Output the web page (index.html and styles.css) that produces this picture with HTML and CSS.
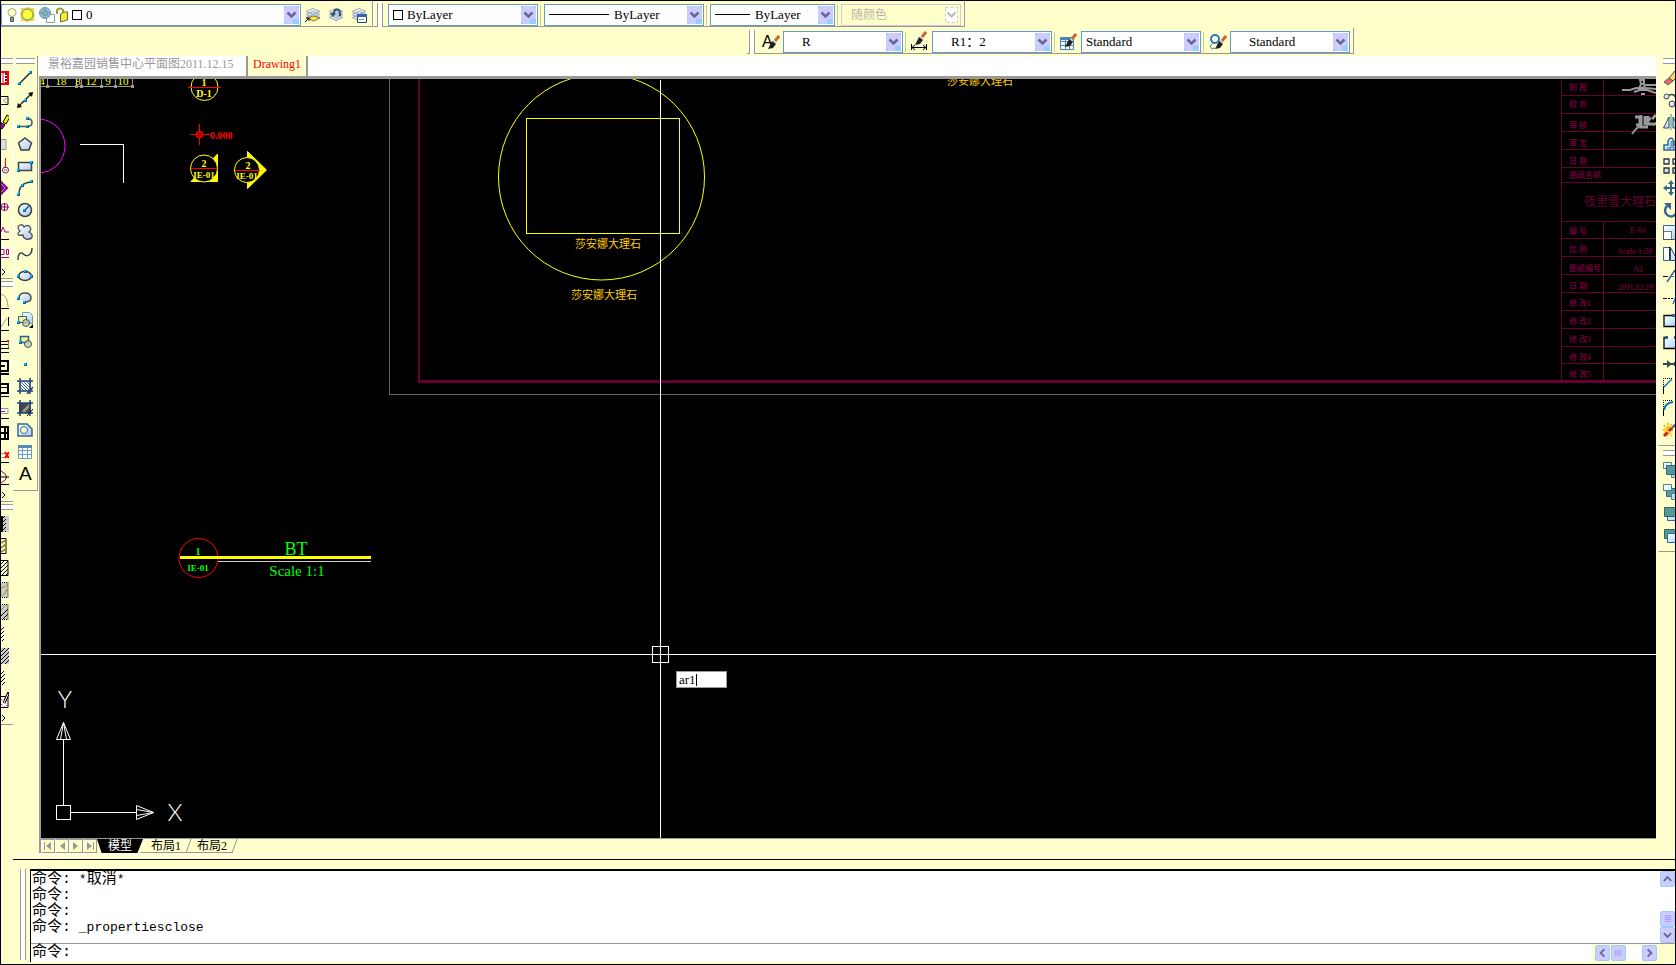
FILE: index.html
```
<!DOCTYPE html>
<html lang="zh-CN">
<head>
    <meta charset="UTF-8">
    <meta name="viewport" content="width=device-width, initial-scale=1.0">
    <title>Drawing1</title>
    <link rel="stylesheet" href="styles.css">
</head>
<body>

<svg class="defs" width="0" height="0" aria-hidden="true">
    <defs>
        <linearGradient id="glass" x1="0" y1="0" x2="1" y2="1">
            <stop offset="0" stop-color="#ffffff"/>
            <stop offset="1" stop-color="#b8c4e4"/>
        </linearGradient>
        <linearGradient id="sky" x1="0" y1="0" x2="1" y2="1">
            <stop offset="0" stop-color="#ffffff"/>
            <stop offset=".5" stop-color="#ccecff"/>
            <stop offset="1" stop-color="#c0b8f0"/>
        </linearGradient>
        <pattern id="hatch" width="3" height="3" patternUnits="userSpaceOnUse">
            <path d="M0 0L3 3" stroke="#336699"/>
        </pattern>
        <pattern id="dots" width="4" height="4" patternUnits="userSpaceOnUse">
            <path d="M0 4L4 0M-1 1L1 -1M3 5L5 3" stroke="#000"/>
        </pattern>
    </defs>
    <symbol id="node" viewBox="0 0 3 3"><path fill="#069" d="M0 0h3v3H0z"/><path fill="#0bf" d="M0 0h2v2H0z"/></symbol>
    <symbol id="down" viewBox="0 0 15 18">
        <path fill="#ccf" d="M0 0h15v18H0z"/>
        <path fill="#9cf" d="M9 13h6v5H9zM0 0h2v2H0zM13 0h2v2h-2zM0 16h2v2H0z"/>
        <path fill="none" stroke="#669" stroke-width="2.5" d="M3.500 6.500l4 4 4-4"/>
    </symbol>
    <symbol id="layers" viewBox="0 0 16 16">
        <path fill="url(#glass)" stroke="#9ab" d="M1 10.500l7-3 7 3-7 3zM1 7.500l7-3 7 3-7 3zM1 4.500l7-3 7 3-7 3z"/>
    </symbol>
    <symbol id="brush" viewBox="0 0 16 16">
        <path stroke="#c63" stroke-width="3" d="M15 2l-4 5"/>
        <path stroke="#ccc" stroke-width="3" d="M11 7l-1.500 2"/>
        <path fill="#222" d="M8 7l4 3-3 4-5 1z"/>
    </symbol>
</svg>

<div class="app">

    <div class="toolbar-row">
        <div class="toolbar">
            <div class="combo layer">
                <svg class="state" width="62" height="16" viewBox="0 0 62 16">
                    <circle cx="6" cy="5.500" r="4" fill="#ffc" stroke="#aa7"/><path fill="#999" stroke="#555" d="M4.500 10.500h3v4h-3z"/>
                    <path fill="#fc3" d="M15 1h4l3-1 3 1h3v4l1 3-1 3v3h-4l-3 1-3-1h-3v-4l-1-3 1-3z"/><circle cx="21.500" cy="7.500" r="5.500" fill="#ff3" stroke="#48a"/>
                    <path fill="#fff" stroke="#999" d="M40.500 7.500h8v8h-8z"/><circle cx="39" cy="6" r="5.500" fill="#9bc" stroke="#69a"/><circle cx="39" cy="6" r="2.500" fill="#bdc" stroke="#58a"/><path stroke="#69a" d="M39 0v12M33 6h12"/>
                    <path fill="none" stroke="#993" stroke-width="2" d="M51 7V3q3-3 6 0v3"/><path fill="#ee3" stroke="#663" d="M54.500 7q3-3 7-2v8l-7 2z"/>
                </svg>
                <span class="swatch"></span>
                <select aria-label="图层"><option>0</option></select>
                <svg class="arrow"><use href="#down"/></svg>
            </div>
            <button class="tool" title="将对象的图层置为当前"><svg viewBox="0 0 16 16"><use href="#layers"/><path fill="#fe3" stroke="#875" d="M3 11l5-2 7 2-6 3z"/><path d="M0 15l4-4M1 11h3v3" fill="none" stroke="#000"/></svg></button>
            <button class="tool" title="上一个图层"><svg viewBox="0 0 16 16"><use href="#layers"/><path fill="none" stroke="#357" stroke-width="2" d="M12 9q1-8-5-6l-2 4"/><path fill="#357" d="M2 6h6l-3 4z"/></svg></button>
            <button class="tool" title="图层特性管理器"><svg viewBox="0 0 16 16"><use href="#layers"/><path fill="#fff" stroke="#247" d="M6.500 7.500h9v8h-9z"/><path fill="#36a" d="M6 7h10v3H6z"/><path stroke="#69c" d="M8 12.500h5"/></svg></button>
        </div>
        <div class="toolbar">
            <span class="grip"></span>
            <div class="combo color">
                <span class="swatch"></span>
                <select aria-label="颜色"><option>ByLayer</option></select>
                <svg class="arrow"><use href="#down"/></svg>
            </div>
            <span class="sep"></span>
            <div class="combo linetype">
                <span class="line-sample"></span>
                <select aria-label="线型"><option>ByLayer</option></select>
                <svg class="arrow"><use href="#down"/></svg>
            </div>
            <span class="sep"></span>
            <div class="combo lineweight">
                <span class="line-sample"></span>
                <select aria-label="线宽"><option>ByLayer</option></select>
                <svg class="arrow"><use href="#down"/></svg>
            </div>
            <span class="sep"></span>
            <div class="combo plot disabled">
                <select aria-label="打印样式" disabled><option>随颜色</option></select>
                <svg class="arrow" viewBox="0 0 15 18"><path fill="#fff" stroke="#ccc" stroke-dasharray="3 2" d="M1.500 1.500h12v15h-12z"/><path fill="none" stroke="#bbb" stroke-width="2" d="M3.500 6.500l4 4 4-4"/></svg>
            </div>
        </div>
    </div>

    <div class="toolbar-row styles-row">
        <div class="toolbar">
            <span class="grip"></span>
            <button class="tool" title="文字样式"><svg viewBox="0 0 16 16"><text x="0" y="13" font-size="16">A</text><use href="#brush" x="2"/></svg></button>
            <div class="combo style indent">
                <select aria-label="文字样式"><option>R</option></select>
                <svg class="arrow"><use href="#down"/></svg>
            </div>
            <span class="sep"></span>
            <button class="tool" title="标注样式"><svg viewBox="0 0 16 16"><use href="#brush" y="-4"/><path stroke="#000" fill="none" d="M.500 10v6M15.500 10v6M1 13.500h14M4 11l-3 2.500L4 16M12 11l3 2.500-3 2.500"/></svg></button>
            <div class="combo style indent">
                <select aria-label="标注样式"><option>R1：2</option></select>
                <svg class="arrow"><use href="#down"/></svg>
            </div>
            <span class="sep"></span>
            <button class="tool" title="表格样式"><svg viewBox="0 0 16 16"><path fill="#fff" stroke="#48b" d="M.500 3.500h13v12H.500zM1 7.500h12M1 11.500h12M5.500 4v11M9.500 4v11"/><path fill="#48b" d="M1 3h13v3H1z"/><use href="#brush" y="-2" x="1"/></svg></button>
            <div class="combo style">
                <select aria-label="表格样式"><option>Standard</option></select>
                <svg class="arrow"><use href="#down"/></svg>
            </div>
            <span class="sep"></span>
            <button class="tool" title="多重引线样式"><svg viewBox="0 0 16 16"><circle cx="6" cy="5" r="4" fill="#fff" stroke="#247bb5" stroke-width="2"/><path fill="none" stroke="#48b" d="M4 9l-3 3 2 3 3-1"/><use href="#brush" x="2"/></svg></button>
            <div class="combo style indent">
                <select aria-label="多重引线样式"><option>Standard</option></select>
                <svg class="arrow"><use href="#down"/></svg>
            </div>
        </div>
    </div>

    <div class="workspace">

        <div class="side custom">
            <div class="palette">
                <span class="hgrip"></span>
                <button title="图块"><svg viewBox="0 0 8 16"><path fill="#fff" stroke="red" stroke-width="2" d="M-2 2h9v12h-9"/><path stroke="#606" stroke-width="2" stroke-dasharray="2 1" d="M5 3v10"/><path stroke="red" d="M2 2v12"/></svg></button>
                <button title="信封"><svg viewBox="0 0 8 16"><path fill="#ffc" stroke="#000" d="M-1 4.500h8v8h-8"/><path stroke="#999" fill="none" d="M6 6L2 8.500 6 11"/></svg></button>
                <button title="删除"><svg viewBox="0 0 8 16"><path fill="#ee0" stroke="#000" d="M2 8l4-7 3 2-4 7z"/><path fill="#a0a" stroke="#000" d="M-1 8l5 3-3 4-3-2z"/></svg></button>
                <button title="实体"><svg viewBox="0 0 8 16"><path fill="#ddd" stroke="#999" d="M-1 3.500h6v10h-6"/></svg></button>
                <button title="轴号"><svg viewBox="0 0 8 16"><path stroke="red" d="M4.500 0v10"/><circle cx="4.500" cy="12" r="3" fill="none" stroke="#808"/><path stroke="#096" d="M3 12h3"/></svg></button>
                <button title="索引"><svg viewBox="0 0 8 16"><path fill="#fff" stroke="#808" stroke-width="2" d="M-1 1l7 7-7 7"/><path fill="#808" d="M0 4l4 4-4 4z"/></svg></button>
                <button title="标高"><svg viewBox="0 0 8 16"><circle cx="3.500" cy="5" r="3.500" fill="none" stroke="#808"/><path stroke="#808" d="M0 5h8M3.500 1v8"/></svg></button>
                <button title="折断"><svg viewBox="0 0 8 16"><path fill="none" stroke="#a0a" d="M0 8l2-5 2 5h4"/><path stroke="#000" d="M0 15.500h8"/></svg></button>
                <button title="文字"><svg viewBox="0 0 8 16"><path fill="none" stroke="#a0a" d="M0 3.500h3v5H0M5.500 3.500h2v5h-2zM0 11.500h8"/></svg></button>
                <button class="more" title="更多"><svg viewBox="0 0 8 12"><path fill="none" stroke="#000" d="M1 3l3 3-3 3"/></svg></button>
            </div>
            <div class="palette">
                <span class="hgrip"></span>
                <button title="门"><svg viewBox="0 0 8 16"><path fill="none" stroke="#999" d="M0 1q7 2 7 13"/><path stroke="#000" d="M0 15.500h8"/></svg></button>
                <button title="单开门"><svg viewBox="0 0 8 16"><path fill="none" stroke="#999" d="M0 12l6-9"/><path fill="none" stroke="#000" d="M7.500 2v9M0 15.500h8"/></svg></button>
                <button title="窗"><svg viewBox="0 0 8 16"><path stroke="#000" fill="none" d="M0 4.500h8v7H0M0 7.500h7M0 15.500h8"/><path fill="red" d="M6 3h2v2H6z"/></svg></button>
                <button title="柜"><svg viewBox="0 0 8 16"><path stroke="#000" stroke-width="2" fill="none" d="M0 2h7v10H0M0 7h4M0 15h8"/></svg></button>
                <button title="沙发"><svg viewBox="0 0 8 16"><path stroke="#000" stroke-width="2" fill="none" d="M0 3h7v9H0"/><path stroke="#000" d="M0 6.500h7M0 15.500h8"/></svg></button>
                <button title="尺寸"><svg viewBox="0 0 8 16"><path fill="#fff" stroke="#999" d="M-1 5.500h8v5h-8"/><path stroke="#a0a" d="M0 8.500h4"/><path stroke="#000" d="M0 15.500h8"/></svg></button>
                <button title="灶具"><svg viewBox="0 0 8 16"><path stroke="#000" stroke-width="2" fill="none" d="M0 2h7v12H0M4 2v12M0 8h7"/></svg></button>
                <button title="修剪"><svg viewBox="0 0 8 16"><path stroke="#999" d="M0 6.500h8M0 10.500h8"/><path stroke="red" stroke-width="2" d="M4 5l4 6M8 5l-4 6"/><path stroke="#000" d="M0 15.500h8"/></svg></button>
                <button title="圆"><svg viewBox="0 0 8 16"><path stroke="#808" fill="none" d="M0 2q11 6 0 12"/><path stroke="#000" d="M0 8h8M0 15.500h8"/></svg></button>
                <button class="more" title="更多"><svg viewBox="0 0 8 12"><path fill="none" stroke="#000" d="M1 3l3 3-3 3"/></svg></button>
            </div>
            <div class="palette">
                <span class="hgrip"></span>
                <button title="填充 1"><svg viewBox="0 0 8 16"><path fill="#ccc" d="M0 0h8v16H0z"/><path fill="url(#dots)" d="M0 0h5v16H0z"/><path stroke="#000" stroke-width="2" d="M1 0v16"/></svg></button>
                <button title="填充 2"><svg viewBox="0 0 8 16"><path fill="#fff" stroke="#000" d="M-1 .5h6v15h-6"/><path fill="none" stroke="#990" stroke-width="2" d="M0 5l5-3M0 10l5-4M0 14l5-3"/></svg></button>
                <button title="填充 3"><svg viewBox="0 0 8 16"><path fill="#ffc" d="M0 0h8v16H0z"/><path fill="url(#dots)" stroke="#000" d="M-1 .5h8v15h-8"/></svg></button>
                <button title="填充 4"><svg viewBox="0 0 8 16"><path fill="#ccc" stroke="#000" stroke-dasharray="1" d="M-1 .5h8v15h-8"/><path fill="none" stroke="#990" d="M0 6q5-1 7-4M0 14q5-2 6-7"/></svg></button>
                <button title="填充 5"><svg viewBox="0 0 8 16"><path fill="#ccc" stroke="#000" stroke-dasharray="1" d="M-1 .5h8v15h-8"/><path stroke="#990" d="M0 6l5-5"/><path stroke="#000" d="M0 12l7-7M2 15l5-5"/></svg></button>
                <button title="填充 6"><svg viewBox="0 0 8 16"><path fill="url(#dots)" d="M0 1h3v14H0z"/></svg></button>
                <button title="填充 7"><svg viewBox="0 0 8 16"><path fill="#ccc" d="M0 0h8v16H0z"/><path fill="url(#dots)" d="M0 0h8v16H0z"/></svg></button>
                <button title="填充 8"><svg viewBox="0 0 8 16"><path fill="url(#dots)" d="M0 1h4v14H0z"/></svg></button>
                <button title="编辑填充"><svg viewBox="0 0 8 16"><path fill="#fff" stroke="#000" d="M-1 4.500h8v11h-8"/><path stroke="#c36" stroke-dasharray="2" d="M0 7l6 7M0 12l4 3"/><path stroke="#000" stroke-width="3" d="M3 11l5-11"/><path stroke="#fff" d="M3 11l4-9"/></svg></button>
                <button class="more" title="更多"><svg viewBox="0 0 8 12"><path fill="none" stroke="#000" d="M1 3l3 3-3 3"/></svg></button>
            </div>
        </div>

        <div class="side draw">
            <div class="palette">
                <span class="hgrip"></span>
                <button title="直线"><svg viewBox="0 0 16 16"><path stroke="#223" stroke-width="1.500" d="M2 14L14 2"/><use href="#node" x="1" y="12" width="3" height="3"/><use href="#node" x="12" y="1" width="3" height="3"/></svg></button>
                <button title="构造线"><svg viewBox="0 0 16 16"><path stroke="#223" stroke-width="1.500" d="M2 14L14 2"/><path d="M0 16l1-5 4 4zM16 0l-1 5-4-4z"/><use href="#node" x="7" y="7" width="3" height="3"/></svg></button>
                <button title="多段线"><svg viewBox="0 0 16 16"><path fill="none" stroke="#456" stroke-width="1.500" d="M1 12.500h9q5 0 5-4t-5-4"/><use href="#node" x="0" y="11" width="3" height="3"/><use href="#node" x="9" y="11" width="3" height="3"/><use href="#node" x="9" y="3" width="3" height="3"/></svg></button>
                <button title="正多边形"><svg viewBox="0 0 16 16"><path fill="url(#glass)" stroke="#345" stroke-width="1.500" d="M8 2l6.500 5-2.500 7H4L1.500 7z"/></svg></button>
                <button title="矩形"><svg viewBox="0 0 16 16"><path fill="url(#glass)" stroke="#345" stroke-width="1.500" d="M1.500 4.500h13v8h-13z"/><use href="#node" x="0" y="11" width="3" height="3"/><use href="#node" x="13" y="3" width="3" height="3"/></svg></button>
                <button title="圆弧"><svg viewBox="0 0 16 16"><path fill="none" stroke="#345" stroke-width="1.500" d="M2 14Q2 3 14 2"/><use href="#node" x="0" y="13" width="3" height="3"/><use href="#node" x="4" y="4" width="3" height="3"/><use href="#node" x="13" y="0" width="3" height="3"/></svg></button>
                <button title="圆"><svg viewBox="0 0 16 16"><circle cx="8" cy="8" r="6.500" fill="url(#glass)" stroke="#345" stroke-width="1.500"/><path stroke="#069" stroke-width="1.500" d="M8 8l4-4"/><use href="#node" x="6" y="7" width="3" height="3"/></svg></button>
                <button title="修订云线"><svg viewBox="0 0 16 16"><path fill="url(#glass)" stroke="#456" stroke-width="1.300" d="M3 7Q-1 3 3 1q3-1 4 2 4-3 6 0t-1 5q4 2 3 5t-6 2q-3-1-3-4-5 1-5-1t2-3z"/></svg></button>
                <button title="样条曲线"><svg viewBox="0 0 16 16"><path fill="none" stroke="#345" stroke-width="1.500" d="M1 14q0-8 4-7 4 4 7 2 3-2 3-7"/></svg></button>
                <button title="椭圆"><svg viewBox="0 0 16 16"><ellipse cx="8" cy="8" rx="6.500" ry="4.500" fill="url(#glass)" stroke="#345" stroke-width="1.500"/><use href="#node" x="0" y="7" width="3" height="3"/><use href="#node" x="13" y="7" width="3" height="3"/><use href="#node" x="7" y="2" width="3" height="3"/></svg></button>
                <button title="椭圆弧"><svg viewBox="0 0 16 16"><path fill="url(#glass)" stroke="#456" stroke-width="1.500" d="M2 8q0-5 6-5t6 5q0 4-6 4"/><use href="#node" x="0" y="7" width="3" height="3"/><use href="#node" x="6" y="11" width="3" height="3"/></svg></button>
                <button title="插入块"><svg viewBox="0 0 16 16"><path fill="url(#sky)" stroke="#69b" d="M5.500.5h7l3 3v8h-10z"/><path fill="#fe9" stroke="#25628c" d="M1.500 4.500h8v6h-8z"/><circle cx="9" cy="11" r="3.500" fill="#cc9" stroke="#357" fill-opacity=".8"/><path d="M16 12v4h-4z"/><use href="#node" x="0" y="9" width="3" height="3"/></svg></button>
                <button title="创建块"><svg viewBox="0 0 16 16"><path fill="#fe9" stroke="#25628c" stroke-width="1.500" d="M3.500 2.500h8v6h-8z"/><circle cx="11" cy="10" r="3.500" fill="#cc9" stroke="#357" fill-opacity=".8"/><use href="#node" x="2" y="7" width="3" height="3"/></svg></button>
                <button title="点"><svg viewBox="0 0 16 16"><use href="#node" x="7" y="7" width="3" height="3"/></svg></button>
                <button title="图案填充"><svg viewBox="0 0 16 16"><path fill="#fff" d="M2 3h12v10H2z"/><path fill="url(#hatch)" d="M2 3h12v10H2z"/><path stroke="#247" stroke-width="1.500" d="M0 3h16M0 13h16M3 0v16M13 0v16M10 16l6-7"/></svg></button>
                <button title="渐变色"><svg viewBox="0 0 16 16"><path fill="#445" d="M2 3h12v10H2z"/><path stroke="#996" stroke-width="3" d="M6 12l7-7"/><path stroke="#247" stroke-width="1.500" d="M0 3h16M0 13h16M3 0v16M13 0v16"/><path stroke="#111" d="M10 16l6-7"/></svg></button>
                <button title="面域"><svg viewBox="0 0 16 16"><path fill="url(#sky)" stroke="#369" stroke-width="1.500" d="M1 2h9l5 5v7H1z"/><circle cx="7" cy="8" r="3.500" fill="#ffc" stroke="#369"/></svg></button>
                <button title="表格"><svg viewBox="0 0 16 16"><path fill="#fff" stroke="#69c" d="M1.500 2.500h13v12h-13zM1 6.500h14M1 10.500h14M5.500 3v11M10.500 3v11"/><path fill="#58b" d="M1 1h14v3H1z"/></svg></button>
                <button class="mtext" title="多行文字">A</button>
            </div>
        </div>

        <div class="document">
            <nav class="file-tabs">
                <a href="#">景裕嘉园销售中心平面图2011.12.15</a>
                <a href="#" class="current">Drawing1</a>
            </nav>

            <div class="canvas">
                <svg class="drawing" role="img" aria-label="图纸">
                    <!-- model space, shifted so the visible corner falls at 41,79 -->
                    <g transform="translate(-41 -79)" fill="none">
                        <g stroke="#999" shape-rendering="crispEdges">
                            <path d="M41 86.500h92M47.500 79v9M76.500 79v9M81.500 79v9M101.500 79v9M115.500 79v9M132.500 79v9"/>
                            <path stroke-width="3" d="M46 86.500h3M75 86.500h3M80 86.500h3M100 86.500h3M114 86.500h3M131 86.500h3"/>
                        </g>
                        <g class="t-yellow small">
                            <text x="42" y="85" text-anchor="middle">4</text>
                            <text x="61" y="85" text-anchor="middle">18</text>
                            <text x="78" y="85" text-anchor="middle">8</text>
                            <text x="91" y="85" text-anchor="middle">12</text>
                            <text x="108" y="85" text-anchor="middle">9</text>
                            <text x="123" y="85" text-anchor="middle">10</text>
                        </g>
                        <circle cx="38" cy="146" r="27" stroke="#f0f"/>
                        <path stroke="#fff" shape-rendering="crispEdges" d="M80 144.500h43.500V183"/>

                        <g stroke="#ff0">
                            <circle cx="204.500" cy="87" r="13.500"/>
                            <path fill="#ff0" d="M217.500 154v27.500H191z"/>
                            <circle cx="204" cy="168.500" r="13.500" fill="#000"/>
                            <path fill="#ff0" d="M247.500 151.500l19 18.500-19 18.500z"/>
                            <circle cx="247" cy="170" r="12.500" fill="#000"/>
                        </g>
                        <g stroke="red" shape-rendering="crispEdges">
                            <path d="M188 87.500h33M191 168.500h26M235 170.500h25M190 134.500h20M199.500 124v21"/>
                        </g>
                        <circle cx="199.500" cy="134.500" r="3.500" stroke="red" fill="#a00"/>
                        <text class="t-red tiny" x="210" y="139">0.000</text>
                        <g class="t-yellow tiny" text-anchor="middle">
                            <text x="204" y="86">1</text>
                            <text x="204" y="97">D-1</text>
                            <text x="204" y="167">2</text>
                            <text class="ref" x="204" y="178">IE-01</text>
                            <text x="248" y="169">2</text>
                            <text class="ref" x="247" y="179">IE-01</text>
                        </g>

                        <circle cx="198.500" cy="558" r="19.500" stroke="red"/>
                        <g shape-rendering="crispEdges">
                            <path stroke="#ff0" stroke-width="3" d="M180 557.500h191"/>
                            <path stroke="#ccc" d="M218 561.500h153"/>
                        </g>
                        <g class="t-green" text-anchor="middle">
                            <text class="tiny" x="198" y="555">1</text>
                            <text class="ref" x="198" y="571">IE-01</text>
                            <text class="title" x="296" y="555">BT</text>
                            <text class="scale" x="297" y="576">Scale 1:1</text>
                        </g>

                        <g shape-rendering="crispEdges">
                            <path stroke="#666" d="M389.500 79v315.500H4000"/>
                            <path stroke="#603" stroke-width="2" d="M419 79v303"/>
                            <path stroke="#603" stroke-width="3" d="M418 381.500H4000"/>
                            <path stroke="#ff0" d="M526.500 118.500h153v115h-153z"/>
                        </g>
                        <circle cx="601.500" cy="177" r="103" stroke="#ff0"/>
                        <g class="t-gold" text-anchor="middle">
                            <text x="608" y="248">莎安娜大理石</text>
                            <text x="604" y="299">莎安娜大理石</text>
                            <text x="980" y="85">莎安娜大理石</text>
                        </g>

                        <!-- title block -->
                        <path stroke="#603" shape-rendering="crispEdges" d="M1561.500 79v302M1603.500 79v88M1603.500 221v160M1561 95.500H4000M1561 113.500H4000M1561 131.500H4000M1561 149.500H4000M1561 167.500H4000M1561 182.500H4000M1561 221.500H4000M1561 238.500H4000M1561 256.500H4000M1561 274.500H4000M1561 292.500H4000M1561 310.500H4000M1561 328.500H4000M1561 346.500H4000M1561 363.500H4000"/>
                        <g class="t-plum">
                            <text x="1569" y="90">制 图</text>
                            <text x="1569" y="107">校 对</text>
                            <text x="1569" y="128">审 核</text>
                            <text x="1569" y="146">审 定</text>
                            <text x="1569" y="164">日 期</text>
                            <text x="1569" y="178">图纸名称</text>
                            <text class="name" x="1584" y="206">夜里雪大理石台</text>
                            <text x="1569" y="234">编 号</text>
                            <text x="1569" y="252">比 例</text>
                            <text x="1569" y="271">图纸编号</text>
                            <text x="1569" y="289">日 期</text>
                            <text x="1569" y="306">修 改1</text>
                            <text x="1569" y="324">修 改2</text>
                            <text x="1569" y="342">修 改3</text>
                            <text x="1569" y="360">修 改4</text>
                            <text x="1569" y="377">修 改5</text>
                            <text x="1630" y="233">E-01</text>
                            <text x="1618" y="254">Scale 1:50</text>
                            <text x="1633" y="272">A3</text>
                            <text x="1618" y="290">2011.12.19</text>
                        </g>
                        <g stroke="#999" stroke-width="2">
                            <path d="M1622 90h8l6-2h6l4-3h10M1640 80h4v4h-3zM1641 84l-2 5 8 1 9 3M1634 92l12-4 10 1M1641 94h4"/>
                            <path stroke-width="3" d="M1635 117h5v8h-4M1641 115v12h7M1645 116v9M1645 119h6M1648 116v8h5M1652 119l4-4M1653 125l3-2"/>
                            <path d="M1640 126l-4 3-4 5"/>
                        </g>

                        <!-- UCS icon -->
                        <path stroke="#fff" shape-rendering="crispEdges" d="M63.500 740v65M56.500 805.500h14v14h-14zM71 812.500h65"/>
                        <path stroke="#fff" d="M63.500 722.500l-7 17h14zM63.500 722.500l-3 17M63.500 722.500l3 17M153.500 812.500l-17-7v14zM153.500 812.500l-17-3M153.500 812.500l-17 3"/>
                        <text class="axis" x="65" y="708" text-anchor="middle">Y</text>
                        <text class="axis" x="175" y="821" text-anchor="middle">X</text>

                        <path stroke="#fff" shape-rendering="crispEdges" d="M660.500 80v4000M41 654.500H4000M652.500 646.500h16v16h-16z"/>
                    </g>
                </svg>
                <label class="dyn-input"><input type="text" value="ar1" aria-label="动态输入"></label>
            </div>

            <div class="sheet-tabs">
                <button class="nav" title="第一个"><svg viewBox="0 0 12 12"><path d="M2 2h1v8H2zM9 2v8L4 6z"/></svg></button>
                <button class="nav" title="上一个"><svg viewBox="0 0 12 12"><path d="M9 2v8L4 6z"/></svg></button>
                <button class="nav" title="下一个"><svg viewBox="0 0 12 12"><path d="M3 2v8l5-4z"/></svg></button>
                <button class="nav" title="最后一个"><svg viewBox="0 0 12 12"><path d="M9 2h1v8H9zM3 2v8l5-4z"/></svg></button>
                <button class="sheet current">模型</button>
                <button class="sheet">布局1</button>
                <button class="sheet">布局2</button>
            </div>
        </div>

        <div class="side modify">
            <div class="palette">
                <span class="hgrip"></span>
                <button title="删除"><svg viewBox="0 0 16 16"><path fill="#fd6" stroke="#543" d="M6 8l6-7 4 3-6 7z"/><path fill="#e66" stroke="#666" d="M1 12l5-4 4 3-5 4z"/></svg></button>
                <button title="复制"><svg viewBox="0 0 16 16"><path fill="none" stroke="#345" stroke-width="1.500" d="M6 3q6-2 7 4"/><circle cx="3.500" cy="4.500" r="2.500" fill="url(#glass)" stroke="#345"/><circle cx="9" cy="12" r="3" fill="url(#glass)" stroke="#345"/></svg></button>
                <button title="镜像"><svg viewBox="0 0 16 16"><path fill="url(#glass)" stroke="#345" d="M6 3v11H.500zM10 3v11h5.500z"/><path stroke="#09c" d="M8 0v16"/></svg></button>
                <button title="偏移"><svg viewBox="0 0 16 16"><path fill="url(#sky)" stroke="#369" stroke-width="1.500" d="M1 14V9h4V5q3-6 6 0v4h5v5z"/><path fill="none" stroke="#369" d="M4 12h4V6q1-2 2 0v6h5"/></svg></button>
                <button title="阵列"><svg viewBox="0 0 16 16"><path fill="url(#glass)" stroke="#234" stroke-width="1.300" d="M1 1h5v5H1zM10 1h5v5h-5zM1 10h5v5H1zM10 10h5v5h-5z"/></svg></button>
                <button title="移动"><svg viewBox="0 0 16 16"><path fill="#369" d="M8 0l3 4H9v3h3V5l4 3-4 3V9H9v3h2l-3 4-3-4h2V9H4v2L0 8l4-3v2h3V4H5z"/></svg></button>
                <button title="旋转"><svg viewBox="0 0 16 16"><path fill="none" stroke="#369" stroke-width="2.500" d="M4 4a6 6 0 1 0 9 1"/><path fill="#369" d="M1 1h7v7z"/></svg></button>
                <button title="缩放"><svg viewBox="0 0 16 16"><path fill="url(#sky)" stroke="#369" d="M.500 1.500h15v14H.500z"/><path fill="#fff" stroke="#000" stroke-dasharray="1" d="M.500 7.500h8v8h-8z"/></svg></button>
                <button title="拉伸"><svg viewBox="0 0 16 16"><path fill="#fff" stroke="#369" d="M.500 1.500h6v13h-6z"/><path fill="url(#sky)" stroke="#247" d="M7.500 1.500l7 13h-7z"/><path stroke="#000" stroke-dasharray="1" d="M6.500 1v14"/></svg></button>
                <button title="修剪"><svg viewBox="0 0 16 16"><path stroke="#000" d="M0 8.500h5"/><path stroke="#08c" stroke-dasharray="3 1" d="M8 8.500h8"/><path stroke="#369" stroke-width="1.500" d="M4 14l8-12"/></svg></button>
                <button title="延伸"><svg viewBox="0 0 16 16"><path stroke="#000" d="M0 8.500h4"/><path stroke="#000" stroke-dasharray="2 1" d="M5 8.500h5"/><path stroke="#08c" stroke-width="1.500" d="M10 14l4-10"/></svg></button>
                <button title="打断于点"><svg viewBox="0 0 16 16"><path fill="url(#sky)" stroke="#000" stroke-width="1.300" d="M1 3.500h14v11H1z"/><path fill="#369" d="M9 2h3v3H9z"/></svg></button>
                <button title="打断"><svg viewBox="0 0 16 16"><path fill="url(#sky)" stroke="#000" stroke-width="1.300" d="M3 3.500H1v11h14v-11h-3"/><path fill="#369" d="M2 2h3v3H2zM11 2h3v3h-3z"/></svg></button>
                <button title="合并"><svg viewBox="0 0 16 16"><path stroke="#000" stroke-width="1.500" d="M0 8h16"/><path fill="#355" d="M4 4l5 4-5 4zM14 4v8L9 8z"/></svg></button>
                <button title="倒角"><svg viewBox="0 0 16 16"><path fill="none" stroke="#000" stroke-dasharray="1" d="M.500 9V.500H9"/><path stroke="#000" d="M.500 9v7"/><path stroke="#07b" stroke-width="1.500" d="M1 9l8-8"/></svg></button>
                <button title="圆角"><svg viewBox="0 0 16 16"><path fill="none" stroke="#000" stroke-dasharray="1" d="M.500 9V.500H9"/><path stroke="#000" d="M.500 9v7"/><path fill="none" stroke="#07b" stroke-width="2" d="M1 10q1-7 9-8"/></svg></button>
                <button title="分解"><svg viewBox="0 0 16 16"><path stroke="#fb0" stroke-width="2" stroke-dasharray="2 1" d="M1 3l8 11M9 2L1 12M5 1v13M0 8h10"/><path stroke="#c22" stroke-width="3" stroke-dasharray="5 2" d="M1 14l8-8"/><path stroke="#556" stroke-width="2" d="M9 6l5-5"/></svg></button>
            </div>
            <div class="palette">
                <span class="hgrip"></span>
                <button title="前置"><svg viewBox="0 0 16 16"><path fill="url(#sky)" stroke="#488" d="M.500.500h8v6h-8zM8.500 8.500h7v7h-7z"/><path fill="#599" stroke="#369" d="M3.500 3.500h10v9h-10z"/></svg></button>
                <button title="后置"><svg viewBox="0 0 16 16"><path fill="#599" stroke="#369" d="M3.500 4.500h10v8h-10z"/><path fill="url(#sky)" stroke="#488" d="M.500.500h8v6h-8zM8.500 9.500h7v6h-7z"/></svg></button>
                <button title="置于对象之上"><svg viewBox="0 0 16 16"><path fill="url(#sky)" stroke="#369" d="M4.500 5.500h11v9h-11z"/><path fill="#599" stroke="#366" d="M1.500 1.500h12v9h-12z"/></svg></button>
                <button title="置于对象之下"><svg viewBox="0 0 16 16"><path fill="#599" stroke="#366" d="M1.500 1.500h12v9h-12z"/><path fill="url(#sky)" stroke="#369" d="M4.500 5.500h11v9h-11z"/></svg></button>
            </div>
        </div>
    </div>

    <div class="splitter"></div>

    <div class="command">
        <span class="grip"></span>
        <div class="console">
            <div class="history">
                <div class="log">
                    <p><span>命令:</span> *<span>取消</span>*</p>
                    <p><span>命令:</span></p>
                    <p><span>命令:</span></p>
                    <p><span>命令:</span> _propertiesclose</p>
                </div>
                <div class="vscroll">
                    <button title="向上"><svg viewBox="0 0 14 14"><path d="M3 9l4-4 4 4"/></svg></button>
                    <span class="track"></span>
                    <button title="滑块"><svg class="lines" viewBox="0 0 14 14"><path d="M4 3.500h7M4 5.500h7M4 7.500h7M4 9.500h7"/></svg></button>
                    <button title="向下"><svg viewBox="0 0 14 14"><path d="M3 5l4 4 4-4"/></svg></button>
                </div>
            </div>
            <div class="prompt">
                <label for="cmd">命令:</label>
                <input type="text" id="cmd">
                <div class="hscroll">
                    <button title="向左"><svg viewBox="0 0 14 14"><path d="M9 3L5 7l4 4"/></svg></button>
                    <button title="滑块"><svg class="lines" viewBox="0 0 14 14"><path d="M3.500 4v6M5.500 4v6M7.500 4v6M9.500 4v6"/></svg></button>
                    <span class="track"></span>
                    <button title="向右"><svg viewBox="0 0 14 14"><path d="M5 3l4 4-4 4"/></svg></button>
                </div>
            </div>
        </div>
    </div>

</div>

</body>
</html>
```
FILE: styles.css
```
* {
    box-sizing: border-box;
}
html, body {
    height: 100%;
    margin: 0;
}
body {
    font-family: "Liberation Serif", "Noto Sans CJK SC", serif;
    font-size: 13px;
    color: black;
    background-color: #ffffcc;
}
.defs {
    position: absolute;
}
button {
    padding: 0;
    border: none;
    background: none;
    color: inherit;
    font: inherit;
    cursor: pointer;
}
svg {
    display: block;
    flex: none;
}
.app {
    display: flex;
    flex-direction: column;
    min-height: 100vh;
    border: 1px solid black;
    overflow: hidden;
}

/* top toolbars */
.toolbar-row {
    display: flex;
    height: 27px;
}
.styles-row {
    height: 28px;
    padding-left: 746px;
}
.toolbar {
    display: flex;
    align-items: center;
    height: 26px;
    padding: 2px 3px 0 0;
    border-right: 1px solid #999;
    border-bottom: 1px solid #999;
}
.toolbar + .toolbar {
    border-left: 1px solid white;
    padding-left: 3px;
}
.toolbar-row .tool + .tool {
    margin-left: 3px;
}
.grip {
    width: 6px;
    height: 24px;
    margin-right: 5px;
    border: solid #999;
    border-width: 0 1px;
    background-color: white;
}
.styles-row .grip {
    margin: 0 3px 0 2px;
}
.sep {
    width: 1px;
    height: 20px;
    margin: 0 3px 0 2px;
    background-color: #cccc99;
}
.tool {
    width: 20px;
    padding: 0 2px;
}
.tool svg {
    width: 16px;
    height: 16px;
    overflow: visible;
    font-family: "Liberation Sans", sans-serif;
}
.styles-row .tool {
    margin: 0 3px 0 2px;
}
.styles-row .sep {
    margin-right: 1px;
}
.combo {
    display: flex;
    align-items: center;
    height: 22px;
    padding: 0 1px 0 4px;
    border: 1px solid #6699cc;
    background-color: white;
}
.combo select {
    flex: 1;
    min-width: 0;
    padding: 0;
    border: none;
    appearance: none;
    background: none;
    color: inherit;
    font: inherit;
}
.arrow {
    width: 15px;
    height: 18px;
}
.swatch {
    width: 10px;
    height: 10px;
    margin-right: 4px;
    border: 1px solid black;
}
.line-sample {
    width: 60px;
    height: 1px;
    margin-right: 5px;
    background-color: black;
}
.layer {
    width: 300px;
    margin-right: 2px;
}
.layer .swatch {
    margin-left: 4px;
}
.color {
    width: 150px;
}
.linetype {
    width: 160px;
}
.lineweight {
    width: 125px;
}
.lineweight .line-sample {
    width: 35px;
}
.plot {
    width: 120px;
    padding-left: 9px;
    font-size: 12px;
}
.disabled {
    color: #999;
    border-color: #ccc;
    background: none;
}
.style {
    width: 120px;
}
.indent {
    padding-left: 18px;
}

/* palettes docked left and right */
.workspace {
    display: flex;
    flex: 1;
    min-height: 0;
}
.side {
    flex: none;
    overflow: hidden;
}
.palette {
    display: flex;
    flex-direction: column;
    padding-top: 2px;
    border-bottom: 1px solid #999;
}
.palette button {
    height: 22px;
}
.palette svg {
    width: 16px;
    height: 16px;
}
.hgrip {
    height: 6px;
    margin-bottom: 3px;
    border: solid #999;
    border-width: 1px 0;
    background-color: white;
}
.custom {
    width: 12px;
}
.custom svg {
    width: 8px;
}
.custom .palette .more {
    height: 13px;
}
.more svg {
    height: 12px;
}
.draw {
    width: 25px;
    margin-right: 1px;
}
.draw .palette {
    border-left: 1px solid white;
    border-right: 1px solid #999;
    padding-bottom: 5px;
}
.draw .hgrip {
    margin: 0 2px 3px;
}
.draw button {
    padding-left: 3px;
}
.draw .mtext {
    font-family: "Liberation Sans", sans-serif;
    font-size: 19px;
    line-height: 22px;
    text-align: left;
    padding-left: 5px;
}
.modify {
    width: 17px;
    margin-left: 2px;
}
.modify .palette {
    padding-bottom: 4px;
    border-left: 1px solid white;
    margin-bottom: 2px;
}
.modify button, .modify .hgrip {
    margin-left: 4px;
}

/* drawing window */
.document {
    display: flex;
    flex: 1;
    flex-direction: column;
    min-width: 0;
}
.file-tabs {
    display: flex;
    height: 20px;
    background-color: white;
    font-size: 12px;
    line-height: 16px;
}
.file-tabs a {
    width: 209px;
    padding-left: 9px;
    border-right: 2px solid #999;
    color: #999;
    text-decoration: none;
    white-space: nowrap;
}
.file-tabs .current {
    width: 60px;
    padding-left: 5px;
    color: red;
    background-color: #ffffcc;
}
.canvas {
    position: relative;
    display: flex;
    flex: 1;
    min-height: 0;
    border: solid #999;
    border-width: 3px 0 1px 2px;
    background-color: black;
}
.drawing {
    flex: 1;
    height: auto;
    min-width: 0;
}
.drawing text {
    stroke: none;
}
.t-yellow {
    fill: yellow;
}
.t-red {
    fill: red;
}
.t-green {
    fill: lime;
}
.t-gold {
    fill: #ffcc00;
    font-size: 11px;
}
.t-plum {
    fill: #660033;
    font-size: 8px;
    font-weight: bold;
}
.t-plum .name {
    font-size: 12px;
    font-weight: normal;
}
.small {
    font-size: 11px;
}
.tiny {
    font-size: 10px;
    font-weight: bold;
}
.ref {
    font-size: 9px;
    font-weight: bold;
}
.title {
    font-size: 18px;
}
.scale {
    font-size: 15px;
}
.axis {
    fill: white;
    font-family: Lato, "Liberation Sans", sans-serif;
    font-size: 24px;
    font-weight: 300;
}
.dyn-input {
    position: absolute;
    left: 635px;
    top: 592px;
    display: flex;
    width: 51px;
    height: 17px;
    border: 1px solid #999;
    background-color: white;
}
.dyn-input input {
    width: 100%;
    padding: 0 2px;
    border: none;
    background: none;
    font: inherit;
}
.dyn-input::after {
    content: "";
    position: absolute;
    left: 19px;
    top: 2px;
    width: 1px;
    height: 12px;
    background-color: black;
}

/* model / layout tabs */
.sheet-tabs {
    display: flex;
    height: 14px;
    border-left: 2px solid #999;
    font-size: 12px;
    line-height: 13px;
}
.nav {
    width: 14px;
    height: 14px;
    border: 1px solid #999;
    border-left-color: white;
    fill: #999;
}
.nav svg {
    width: 12px;
    height: 12px;
}
.sheet {
    position: relative;
    width: 46px;
    height: 14px;
}
.sheet::after {
    content: "";
    position: absolute;
    inset: 0;
    border: solid #999;
    border-width: 0 1px 1px 0;
    transform: skewX(-20deg);
}
.sheet.current {
    color: white;
    background-color: black;
    clip-path: polygon(0 0, 100% 0, 88% 100%, 10% 100%);
}
.sheet.current::after {
    border: none;
}

/* command window */
.splitter {
    height: 6px;
    margin-top: 1px;
    margin-left: 12px;
    border-top: 1px solid white;
    border-bottom: 1px solid black;
}
.command {
    display: flex;
    height: 104px;
    padding: 9px 0 2px 19px;
}
.command .grip {
    height: 91px;
    margin-right: 4px;
}
.console {
    display: flex;
    flex: 1;
    flex-direction: column;
    border: solid black;
    border-width: 2px 0 0 1px;
    background-color: white;
    font-family: "Liberation Mono", "Noto Sans CJK SC", monospace;
}
.history {
    display: flex;
    height: 73px;
    border-bottom: 1px solid #999;
}
.log {
    flex: 1;
    padding-top: 1px;
}
.log p {
    height: 16px;
    margin: 0;
    padding-left: 1px;
    line-height: 16px;
}
.log span, .prompt label {
    font-size: 15px;
}
.prompt {
    display: flex;
    flex: 1;
    line-height: 18px;
}
.prompt label {
    padding-left: 1px;
}
.prompt input {
    flex: 1;
    padding: 0 4px;
    border: none;
    outline: none;
    background: none;
    font: inherit;
}
.vscroll {
    display: flex;
    flex-direction: column;
    width: 15px;
}
.hscroll {
    display: flex;
    align-items: center;
    padding: 0 18px 0 3px;
    background-color: #ffffcc;
}
.vscroll .track {
    flex: 1;
}
.hscroll .track {
    width: 16px;
    height: 16px;
    background-color: white;
}
.vscroll button, .hscroll button {
    width: 15px;
    height: 16px;
    border: 1px solid #99ccff;
    border-radius: 2px;
    background-color: #ccccff;
}
.hscroll button + button {
    margin-left: 1px;
}
.vscroll svg, .hscroll svg {
    width: 13px;
    height: 14px;
    fill: none;
    stroke: #666699;
    stroke-width: 2px;
}
.vscroll .lines, .hscroll .lines {
    stroke: #9999ff;
    stroke-width: 1px;
}
```
